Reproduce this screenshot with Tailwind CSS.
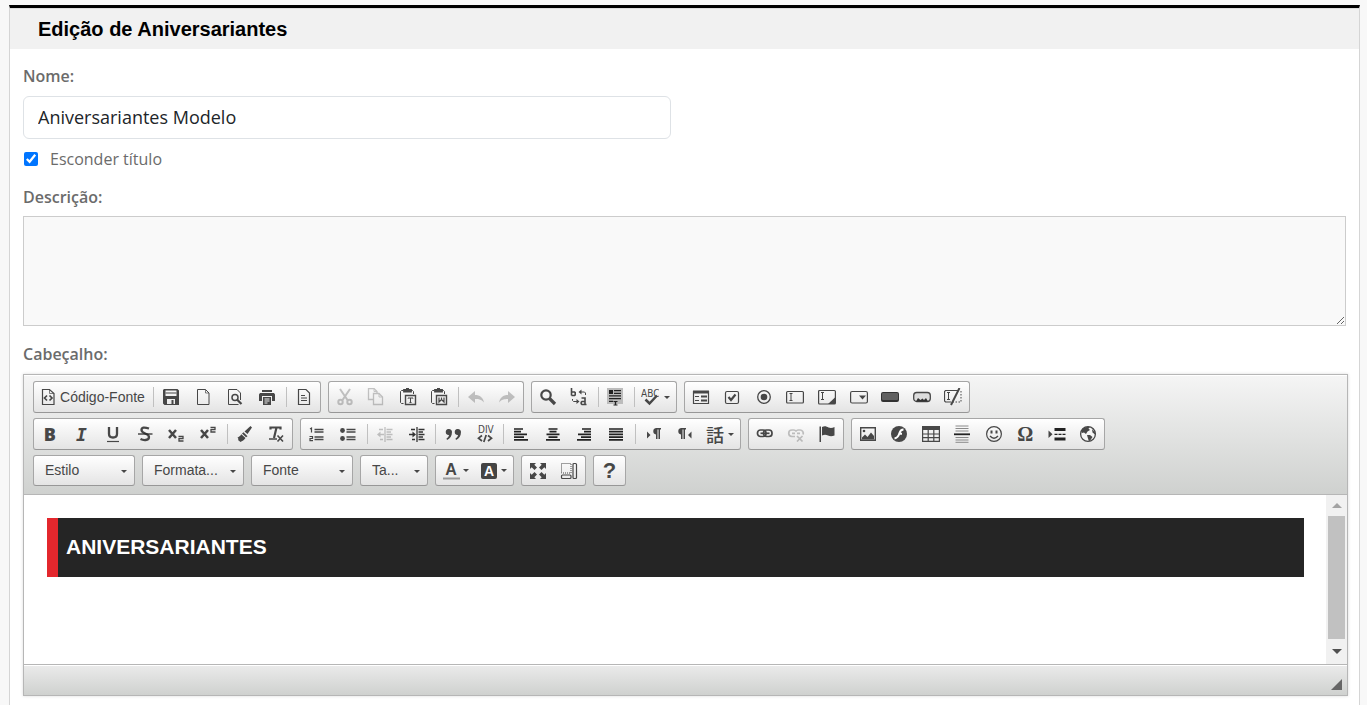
<!DOCTYPE html>
<html lang="pt-BR">
<head>
    <meta charset="UTF-8">
    <meta name="viewport" content="width=device-width, initial-scale=1.0">
    <title>Edição de Aniversariantes</title>
    <script src="https://cdn.jsdelivr.net/npm/@tailwindcss/browser@4"></script>
</head>
<body class="bg-[#f8f8f8] pt-[5px] pl-[9px] pr-[7px] font-['Open_Sans','Noto_Sans',sans-serif] text-[16px] text-[#6b6b6b] overflow-hidden">
    <main class="bg-white border-x border-[#d5d5d5] border-t-[3px] border-t-black min-h-screen">
        <header class="h-[41px] bg-[#f1f1f1] border-t border-[#dcdcdc] pl-7 flex items-center">
            <h1 class="font-['Liberation_Sans',Arial,sans-serif] font-bold text-[20px] leading-6 text-black">Edição de Aniversariantes</h1>
        </header>

        <form class="px-[13px] pt-4">
            <label for="nome" class="block font-semibold leading-[22px]">Nome:</label>
            <input id="nome" type="text" value="Aniversariantes Modelo" class="block w-[49%] h-[43px] mt-[9px] px-[14px] pb-[2px] border border-[#dee2e6] rounded-md bg-white text-[18px] text-[#212529]">

            <div class="flex items-center mt-[9px] h-[22px]">
                <input id="esconder" type="checkbox" checked class="size-[14px] ml-px mr-3 accent-[#0075ff]">
                <label for="esconder">Esconder título</label>
            </div>

            <label for="descricao" class="block font-semibold leading-[22px] mt-4">Descrição:</label>
            <textarea id="descricao" class="block w-full h-[110px] mt-[8px] p-2 border border-[#cccccc] bg-[#f9f9f9] resize"></textarea>

            <span class="block font-semibold leading-[22px] mt-[17px]">Cabeçalho:</span>

            <!-- Rich text editor -->
            <div class="box-content w-full mt-[9px] border border-[#b6b6b6] shadow-[0_0_3px_rgba(0,0,0,0.15)] font-['Liberation_Sans',Arial,sans-serif] text-[14px] text-[#474747]">
                <div class="flex flex-col gap-[5px] h-[120px] pt-[6px] px-[9px] border-b border-[#b6b6b6] shadow-[inset_0_1px_0_#fff] bg-linear-to-b from-[#f5f5f5] to-[#cfd1cf] [&_button]:h-full [&_button]:flex [&_button]:items-center [&_button]:justify-center [&_svg]:size-[18px] [&_svg]:shrink-0">

                    <!-- Row 1 -->
                    <div class="flex gap-[7px] h-8">
                        <div class="w-[288px] flex items-center border border-[#a6a6a6] border-b-[#979797] rounded-[3px] bg-linear-to-b from-white to-[#e4e4e4]">
                            <button type="button" class="w-[116px] shrink-0 gap-[3px]">
                                <svg viewBox="0 0 18 18" fill="none" stroke="currentColor"><path d="M3.500 1.500h7l4.500 4v11h-11.500z" stroke-width="1.200"/><path d="M10.500 1.500v4h4.500" stroke-width=".7"/><path d="M8 7.500l-2.500 2.500 2.500 2.500M10.500 7.500l2.500 2.500-2.500 2.500" stroke-width="1.700"/></svg>
                                Código-Fonte
                            </button>
                            <span class="w-px h-5 ml-[3px] mr-px bg-[#c0c0c0]"></span>
                            <button type="button" class="flex-1" title="Salvar"><svg viewBox="0 0 18 18"><path fill="currentColor" fill-rule="evenodd" d="M2 1h13.500l1.500 1.500V17H2.500L1 15.500V2zM3.500 2.500v5.500h11V2.500zM5 11v5h8v-5z"/><path fill="currentColor" d="M9.500 12h2v4h-2zM3.500 4.500h11v1h-11z"/></svg></button>
                            <button type="button" class="flex-1" title="Nova página"><svg viewBox="0 0 18 18" fill="none" stroke="currentColor"><path d="M3.500 1.500h8l3.500 3.500v11.500H3.500z"/><path d="M11.500 1.500V5H15" stroke-width=".7"/></svg></button>
                            <button type="button" class="flex-1" title="Visualizar"><svg viewBox="0 0 18 18" fill="none" stroke="currentColor"><path d="M14.500 12V5L11 1.500H2.500v15h10"/><circle cx="9" cy="9.500" r="3" stroke-width="1.500"/><path d="M11 11.500l4.500 4.500" stroke-width="2.200"/></svg></button>
                            <button type="button" class="flex-1" title="Imprimir"><svg viewBox="0 0 18 18" fill="currentColor"><path d="M4 2h10v2H4zM2 5h14l1 1.500V13h-3V8H4v5H1V6.500z"/><path fill-rule="evenodd" d="M5 9h8v8H5zm1.500 1.500v1h5v-1zm0 2v1h5v-1zm0 2v1h3v-1z"/></svg></button>
                            <span class="w-px h-5 ml-[3px] mr-px bg-[#c0c0c0]"></span>
                            <button type="button" class="flex-1" title="Modelos"><svg viewBox="0 0 18 18" fill="none" stroke="currentColor"><path d="M3.500 1.500h7.500l3.500 3.500v11.500h-11z" stroke-width="1.200"/><path d="M6 7.500h4M6 10h6M6 12.500h6" stroke-width="1.200"/></svg></button>
                        </div>

                        <div class="w-[196px] flex items-center border border-[#a6a6a6] border-b-[#979797] rounded-[3px] bg-linear-to-b from-white to-[#e4e4e4]">
                            <button type="button" class="flex-1 opacity-30" title="Recortar"><svg viewBox="0 0 18 18" fill="none" stroke="currentColor" stroke-width="2"><path d="M4 1l7.500 11M14 1L6.500 12"/><circle cx="4.500" cy="14" r="2.200"/><circle cx="13.500" cy="14" r="2.200"/></svg></button>
                            <button type="button" class="flex-1 opacity-30" title="Copiar"><svg viewBox="0 0 18 18" fill="none" stroke="currentColor" stroke-width="1.300"><path d="M6 11.500H1.500v-11H7l3 3v2"/><path d="M6.500 5.500H12l3.500 3.500v7.500h-9z"/><path d="M12 5.500V9h3.500M7 .500v3h3" stroke-width=".9"/></svg></button>
                            <button type="button" class="flex-1" title="Colar como texto"><svg viewBox="0 0 18 18" fill="none" stroke="currentColor"><path d="M4.500 15.500H2.500l-1-1v-11l1-1h2M12 2.500h1.500l1 1V6"/><path d="M5 2h7v1.500H5zM7 .500h3" stroke-width="1.800"/><path d="M6.500 7.500h10v9h-10z" stroke-width="1.400"/><path d="M9 10.500V10h5v.5M11.500 10v4.500M10.500 14.500h2"/></svg></button>
                            <button type="button" class="flex-1" title="Colar do Word"><svg viewBox="0 0 18 18" fill="none" stroke="currentColor"><path d="M4.500 15.500H2.500l-1-1v-11l1-1h2M12 2.500h1.500l1 1V6"/><path d="M5 2h7v1.500H5zM7 .500h3" stroke-width="1.800"/><path d="M6.500 7.500h10v9h-10z" stroke-width="1.400"/><path d="M9 9.500v4.500l2.500-2.500L14 14V9.500M11.500 9.500v2" stroke-width="1.200"/></svg></button>
                            <span class="w-px h-5 ml-[3px] mr-px bg-[#c0c0c0]"></span>
                            <button type="button" class="flex-1 opacity-30" title="Desfazer"><svg viewBox="0 0 18 18" fill="currentColor"><path d="M1 9l7-6v4c5 0 8 2.500 9 7.500-2.500-3-5-3.500-9-3.500v4z"/></svg></button>
                            <button type="button" class="flex-1 opacity-30" title="Refazer"><svg viewBox="0 0 18 18" fill="currentColor"><path d="M17 9l-7-6v4c-5 0-8 2.500-9 7.500 2.500-3 5-3.500 9-3.500v4z"/></svg></button>
                        </div>

                        <div class="w-[146px] flex items-center border border-[#a6a6a6] border-b-[#979797] rounded-[3px] bg-linear-to-b from-white to-[#e4e4e4]">
                            <button type="button" class="flex-1" title="Localizar"><svg viewBox="0 0 18 18" fill="none" stroke="currentColor"><circle cx="7" cy="7" r="4.700" stroke-width="2.200"/><path d="M10.500 10.500l5.500 5.500" stroke-width="3.200"/></svg></button>
                            <button type="button" class="flex-1" title="Substituir"><svg viewBox="0 0 18 18" fill="none" stroke="currentColor"><path d="M1.500 0v7.500M1.500 4h3l.7.7v2.100l-.7.700h-3M11.500 10h3.500v6.500h-3l-.8-.8v-1.400l.8-.8h3M15 16.500h1.500" stroke-width="1.600"/><path d="M2.500 11v1.500l1 1h4M15.500 7V5l-1-1h-4"/><path d="M6.500 11l3 2.500-3 2.500zM11.500 1.500l-3 2.500 3 2.500z" fill="currentColor" stroke="none"/></svg></button>
                            <span class="w-px h-5 ml-[3px] mr-px bg-[#c0c0c0]"></span>
                            <button type="button" class="flex-1" title="Selecionar tudo"><svg viewBox="0 0 18 18"><path fill="#bcbcbc" d="M1 0h16v16H1z"/><path fill="#222" d="M3 2h4v4H3zM8 2h7v1.200H8zM8 4.700h7v1.200H8zM3 7.300h12v1.200H3zM3 10h12v1.200H3zM3 12.700h4v1.200H3zM7.500 13h4v1h-1.300v2.500h1.300v1h-4v-1h1.300V14H7.500z"/></svg></button>
                            <span class="w-px h-5 ml-[3px] mr-px bg-[#c0c0c0]"></span>
                            <button type="button" class="w-10 shrink-0 gap-[5px]" title="Corretor ortográfico"><svg viewBox="0 0 18 18" fill="none" stroke="currentColor"><path d="M4.500 11.500l4 4 7.500-8" stroke-width="2.500"/><text x="0" y="9" font-size="10" font-family="Liberation Sans Narrow, DejaVu Sans Condensed, sans-serif" fill="currentColor" stroke="none">ABC</text></svg><span class="border-x-[3px] border-x-transparent border-t-[3px] border-t-[#474747]"></span></button>
                        </div>

                        <div class="w-[286px] flex items-center border border-[#a6a6a6] border-b-[#979797] rounded-[3px] bg-linear-to-b from-white to-[#e4e4e4]">
                            <button type="button" class="flex-1" title="Formulário"><svg viewBox="0 0 18 18" fill="none" stroke="currentColor"><path d="M1.500 3.500h15v12h-15z" stroke-width="1.200"/><path d="M1 4h16" stroke-width="3"/><path d="M3 8.500h4M3 12.500h4" stroke-width="1.200"/><path d="M9 8.500h6M9 12.500h6" stroke-width="2.200"/></svg></button>
                            <button type="button" class="flex-1" title="Caixa de seleção"><svg viewBox="0 0 18 18" fill="none" stroke="currentColor"><rect x="2.500" y="3.500" width="13" height="12" rx="1.500" stroke-width="1.200"/><path d="M5.500 9l2.500 3 4.500-5.500" stroke-width="2.200"/></svg></button>
                            <button type="button" class="flex-1" title="Botão de opção"><svg viewBox="0 0 18 18" fill="none" stroke="currentColor"><circle cx="9" cy="9" r="6.300" stroke-width="1.300"/><circle cx="9" cy="9" r="3.300" fill="currentColor" stroke="none"/></svg></button>
                            <button type="button" class="flex-1" title="Caixa de texto"><svg viewBox="0 0 18 18" fill="none" stroke="currentColor"><rect x=".6" y="3.500" width="16.800" height="11.500" rx="1" stroke-width="1.200"/><path d="M3.500 5.500h3M3.500 12.500h3M5 5.500v7"/></svg></button>
                            <button type="button" class="flex-1" title="Área de texto"><svg viewBox="0 0 18 18" fill="none" stroke="currentColor"><rect x=".6" y="2.500" width="16.800" height="13.500" rx="1" stroke-width="1.200"/><path d="M3 4.500h3M3 11.500h3M4.500 4.500v7"/><path d="M17 9.500V16h-7z" fill="currentColor" stroke="none"/></svg></button>
                            <button type="button" class="flex-1" title="Caixa de listagem"><svg viewBox="0 0 18 18" fill="none" stroke="currentColor"><rect x=".6" y="3.500" width="16.800" height="11.500" rx="1.500" stroke-width="1.200"/><path d="M9 7.500h7l-3.500 4z" fill="currentColor" stroke="none"/></svg></button>
                            <button type="button" class="flex-1" title="Botão"><svg viewBox="0 0 18 18"><rect x="0" y="4" width="18" height="10" rx="2" fill="#333"/><rect x="1" y="5" width="16" height="7" rx="1" fill="#606060"/></svg></button>
                            <button type="button" class="flex-1" title="Botão de imagem"><svg viewBox="0 0 18 18"><rect x=".7" y="4.500" width="16.600" height="9" rx="3" fill="#ddd" stroke="currentColor" stroke-width="1.300"/><path fill="#333" d="M3 13.500l2-3.500 2.500 2 2-1.500 1.500 1.500 2-2 2 3.500z"/></svg></button>
                            <button type="button" class="flex-1" title="Campo oculto"><svg viewBox="0 0 18 18" fill="none" stroke="currentColor"><path d="M14 2.500H1.500l-1 1v9.500l1 1H7" stroke-width="1.200"/><path d="M3 4.500h3M3 11.500h3M4.500 4.500v7"/><path d="M17 3v11H9" stroke-dasharray="1.500 1.500"/><path d="M15.500 0L7 17" stroke-width="2"/></svg></button>
                        </div>
                    </div>

                    <!-- Row 2 -->
                    <div class="flex gap-[7px] h-8">
                        <div class="w-[260px] flex items-center border border-[#a6a6a6] border-b-[#979797] rounded-[3px] bg-linear-to-b from-white to-[#e4e4e4]">
                            <button type="button" class="flex-1 font-['Open_Sans',sans-serif] font-extrabold text-[18px]" title="Negrito">B</button>
                            <button type="button" class="flex-1 font-['DejaVu_Sans_Mono',monospace] font-bold italic text-[18px]" title="Itálico">I</button>
                            <button type="button" class="flex-1" title="Sublinhado"><svg viewBox="0 0 18 18" fill="none" stroke="currentColor"><path d="M5 2v7q0 3.500 4 3.500t4-3.500V2" stroke-width="2.300"/><path d="M3 16.500h12" stroke-width="1.200"/></svg></button>
                            <button type="button" class="flex-1" title="Tachado"><svg viewBox="0 0 18 18" fill="none" stroke="currentColor"><path d="M13 3.500Q5.500 1 5.500 5c0 4 7.500 3 7.500 7 0 4-6 3.300-8.500 2" stroke-width="2.300"/><path d="M2 9h14.500" stroke="#222" stroke-width="1.200"/></svg></button>
                            <button type="button" class="flex-1" title="Subscrito"><svg viewBox="0 0 18 18" fill="none" stroke="currentColor"><path d="M2 5l7 8M9 5l-7 8" stroke-width="2.500"/><path d="M11.500 11.500H16v2.200h-4v2.300h4.500" stroke-width="1.300"/></svg></button>
                            <button type="button" class="flex-1" title="Sobrescrito"><svg viewBox="0 0 18 18" fill="none" stroke="currentColor"><path d="M2 5l7 8M9 5l-7 8" stroke-width="2.500"/><path d="M11.500 2.500H16v2.200h-4V7h4.500" stroke-width="1.300"/></svg></button>
                            <span class="w-px h-5 ml-[3px] mr-px bg-[#c0c0c0]"></span>
                            <button type="button" class="flex-1" title="Copiar formatação"><svg viewBox="0 0 18 18" fill="currentColor"><path d="M14.500 1L16 2.500 11.500 9 8.500 6.500zM7.500 7.300l4 4-1.500 1L6 8.500zM5.300 9.300l4.200 3.700c-1 2-3.500 3-5 4L2 15l.5-1-1-1.500c1.500-.5 2.800-1.500 3.800-3.200z"/></svg></button>
                            <button type="button" class="flex-1" title="Remover formatação"><svg viewBox="0 0 18 18" fill="none" stroke="currentColor"><path d="M3.500 4.500V2.500h10v2M9.500 2.500L7 13" stroke-width="2.200"/><path d="M2 14h8M10.500 10.500l5.500 6M16 10.500l-5.500 6" stroke-width="1.600"/></svg></button>
                        </div>

                        <div class="w-[441px] flex items-center border border-[#a6a6a6] border-b-[#979797] rounded-[3px] bg-linear-to-b from-white to-[#e4e4e4]">
                            <button type="button" class="flex-1" title="Lista numerada"><svg viewBox="0 0 18 18" fill="none" stroke="currentColor"><path d="M6.500 4.500h9M6.500 7h9M6.500 12h9M6.500 14.500h9" stroke-width="1.400"/><path d="M2 4l1.500-1v4.500M1.500 11.500h3v2H2v2.200h3" stroke-width="1.200"/></svg></button>
                            <button type="button" class="flex-1" title="Lista com marcadores"><svg viewBox="0 0 18 18" fill="none" stroke="currentColor"><path d="M7.500 4.500h9M7.500 7h9M7.500 12h9M7.500 14.500h9" stroke-width="1.400"/><g fill="currentColor" stroke="none"><circle cx="3.500" cy="5.500" r="2.400"/><circle cx="3.500" cy="13.500" r="2.400"/></g></svg></button>
                            <span class="w-px h-5 ml-[3px] mr-px bg-[#c0c0c0]"></span>
                            <button type="button" class="flex-1 opacity-30" title="Diminuir recuo"><svg viewBox="0 0 18 18" fill="none" stroke="currentColor"><path d="M9 2v15M10.500 4.500h6M10.500 7h4.500M10.500 9.500h6M10.500 12h4.500M10.500 14.500h6M3 4.500h4M4 14.500h3M3 9.500h5" stroke-width="1.300"/><path d="M4.500 6.500L1 9.500l3.500 3z" fill="currentColor" stroke="none"/></svg></button>
                            <button type="button" class="flex-1" title="Aumentar recuo"><svg viewBox="0 0 18 18" fill="none" stroke="#333"><path d="M9 2v15M10.500 4.500h6M10.500 7h4.500M10.500 9.500h6M10.500 12h4.500M10.500 14.500h6M3 4.500h4M4 14.500h3M1 9.500h5" stroke-width="1.300"/><path d="M4.500 6.500L8 9.500l-3.500 3z" fill="#333" stroke="none"/></svg></button>
                            <span class="w-px h-5 ml-[3px] mr-px bg-[#c0c0c0]"></span>
                            <button type="button" class="flex-1" title="Citação"><svg viewBox="0 0 18 18" fill="currentColor"><path d="M4.500 4a3 3 0 0 1 3.500 3c0 4-2 6.500-5 8l-.500-1.500c1.500-1 2.300-2 2.500-3.500A3 3 0 0 1 4.500 4zM13.500 4a3 3 0 0 1 3.500 3c0 4-2 6.500-5 8l-.500-1.500c1.500-1 2.300-2 2.500-3.500A3 3 0 0 1 13.500 4z"/></svg></button>
                            <button type="button" class="flex-1" title="Div"><svg viewBox="0 0 18 18" fill="none" stroke="currentColor"><text x="2" y="8" font-size="10" font-family="Liberation Sans Narrow, DejaVu Sans Condensed, sans-serif" fill="currentColor" stroke="none">DIV</text><path d="M6 10.500l-3.500 2.700L6 16M12 10.500l3.500 2.700L12 16M10.200 10l-2.400 7" stroke-width="1.700"/></svg></button>
                            <span class="w-px h-5 ml-[3px] mr-px bg-[#c0c0c0]"></span>
                            <button type="button" class="flex-1" title="Alinhar à esquerda"><svg viewBox="0 0 18 18" fill="none" stroke="#222" stroke-width="1.700"><path d="M2 4h9M2 6.700h7M2 9.400h13M2 12.100h10M2 14.800h14"/></svg></button>
                            <button type="button" class="flex-1" title="Centralizar"><svg viewBox="0 0 18 18" fill="none" stroke="#222" stroke-width="1.700"><path d="M4.500 4h9M5.500 6.700h7M2.500 9.400h13M4.500 12.100h9M2 14.800h14"/></svg></button>
                            <button type="button" class="flex-1" title="Alinhar à direita"><svg viewBox="0 0 18 18" fill="none" stroke="#222" stroke-width="1.700"><path d="M7 4h9M9 6.700h7M3 9.400h13M6 12.100h10M2 14.800h14"/></svg></button>
                            <button type="button" class="flex-1" title="Justificado"><svg viewBox="0 0 18 18" fill="none" stroke="#222" stroke-width="1.700"><path d="M2 4h14M2 6.700h14M2 9.400h14M2 12.100h14M2 14.800h14"/></svg></button>
                            <span class="w-px h-5 ml-[3px] mr-px bg-[#c0c0c0]"></span>
                            <button type="button" class="flex-1" title="Esquerda para direita"><svg viewBox="0 0 18 18" fill="currentColor"><path d="M3 6.500L6.500 10 3 13.500zM17 3v1.500h-1V14h-1.500V4.500h-1V14H12V9.500A3.300 3.300 0 0 1 12 3z"/></svg></button>
                            <button type="button" class="flex-1" title="Direita para esquerda"><svg viewBox="0 0 18 18" fill="currentColor"><path d="M16.500 6.500L13 10l3.500 3.500zM11 3v1.500h-1V14H8.500V4.500h-1V14H6V9.500A3.300 3.300 0 0 1 6 3z"/></svg></button>
                            <button type="button" class="w-10 shrink-0 gap-1" title="Idioma"><span class="w-[18px] leading-[18px] text-[18px] font-medium font-['Noto_Sans_CJK_JP',sans-serif]">話</span><span class="border-x-[3px] border-x-transparent border-t-[3px] border-t-[#474747]"></span></button>
                        </div>

                        <div class="w-[96px] flex items-center border border-[#a6a6a6] border-b-[#979797] rounded-[3px] bg-linear-to-b from-white to-[#e4e4e4]">
                            <button type="button" class="flex-1" title="Link"><svg viewBox="0 0 18 18" fill="none" stroke="currentColor" stroke-width="1.700"><rect x="1.500" y="5" width="8.500" height="6.500" rx="3"/><rect x="7.500" y="5" width="8.500" height="6.500" rx="3"/><path d="M4.500 8.300h9"/></svg></button>
                            <button type="button" class="flex-1 opacity-30" title="Remover link"><svg viewBox="0 0 18 18" fill="none" stroke="currentColor" stroke-width="1.700"><path d="M8 11.500H5a3.200 3.200 0 0 1 0-6.500h2a3 3 0 0 1 2 1 3 3 0 0 1 2-1h2a3.200 3.200 0 0 1 3 4.500M5 8.300h3M10 8.300h3M10 11l5.500 5.500M15.500 11L10 16.500"/></svg></button>
                            <button type="button" class="flex-1" title="Âncora"><svg viewBox="0 0 18 18" fill="currentColor"><path d="M1.500 1.500H3V17H1.500zM4 2c3-1.500 4.500-.5 6.500.5 2 .8 4 .5 6-.5v8.500c-2.500 1-4.500 1-6.500 0-2-.8-3.500-1-6 0z"/></svg></button>
                        </div>

                        <div class="w-[254px] flex items-center border border-[#a6a6a6] border-b-[#979797] rounded-[3px] bg-linear-to-b from-white to-[#e4e4e4]">
                            <button type="button" class="flex-1" title="Imagem"><svg viewBox="0 0 18 18" fill="none" stroke="currentColor"><path d="M1.700 2.700h14.600v12.600H1.700z" stroke-width="1.400"/><path d="M3 14.500v-2l3-3 2.500 2.500L12 7.500l3 3.500v3.500z" fill="currentColor" stroke="none"/><circle cx="5" cy="6" r="1.300" fill="currentColor" stroke="none"/></svg></button>
                            <button type="button" class="flex-1" title="Flash"><svg viewBox="0 0 18 18"><circle cx="9" cy="9" r="8" fill="currentColor"/><path d="M13.500 4.500q-3 0-4 3.500-1.500 5-5 5.500M8.500 8.700h3.500" fill="none" stroke="#fff" stroke-width="2"/></svg></button>
                            <button type="button" class="flex-1" title="Tabela"><svg viewBox="0 0 18 18" fill="none" stroke="currentColor" stroke-width="1.200"><path d="M.6 2.500h16.800v13.900H.6zM6.200 5v11M11.800 5v11M1 9h16M1 12.700h16"/><path d="M0 3h18" stroke-width="4"/></svg></button>
                            <button type="button" class="flex-1" title="Linha horizontal"><svg viewBox="0 0 18 18" fill="none"><path d="M2.500 1h13M2.500 3.500h13M2.500 6h13M2.500 12.500h13M2.500 15h13M2.500 17.300h13" stroke="#8a8a8a"/><path d="M1 9.300h16" stroke="#222" stroke-width="1.800"/></svg></button>
                            <button type="button" class="flex-1" title="Emoticon"><svg viewBox="0 0 18 18" fill="none" stroke="currentColor"><circle cx="9" cy="9" r="7.400" stroke-width="1.200"/><path d="M5 11q4 4.500 8 0" stroke-width="1.400"/><path d="M6.500 5.500v3M11.500 5.500v3" stroke-width="2"/></svg></button>
                            <button type="button" class="flex-1 font-['Liberation_Serif',serif] font-bold text-[20px]" title="Caractere especial">Ω</button>
                            <button type="button" class="flex-1" title="Quebra de página"><svg viewBox="0 0 18 18" fill="none" stroke="#222"><path d="M6.500 4.500h11M6.500 14h11" stroke-width="2.800"/><path d="M6.500 9.300h11" stroke-width="1.200" stroke-dasharray="3 1"/><path d="M.5 5.500L4.500 9.300.5 13z" fill="#444" stroke="none"/></svg></button>
                            <button type="button" class="flex-1" title="IFrame"><svg viewBox="0 0 18 18"><circle cx="9" cy="9" r="7.400" fill="#f4f4f4" stroke="currentColor" stroke-width="1.300"/><path fill="currentColor" d="M3 4.500Q6 1 11 2L9.500 3.500 11 5 8.500 6.500 7 9 5 7.500l-2 .5zM8 10h3l2.500 2-2 3-1.500 1.500-1-3zM13 4l3 3.500v2l-2.500-2z"/></svg></button>
                        </div>
                    </div>

                    <!-- Row 3 -->
                    <div class="flex gap-[7px] h-[31px]">
                        <div class="relative w-[102px] border border-[#a6a6a6] border-b-[#979797] rounded-[3px] bg-linear-to-b from-white to-[#e4e4e4]">
                            <select aria-label="Estilo" class="appearance-none block w-full h-full pl-[11px] outline-none"><option>Estilo</option></select>
                            <span class="absolute right-[7px] top-[14px] border-x-[3px] border-x-transparent border-t-[3px] border-t-[#474747] pointer-events-none"></span>
                        </div>
                        <div class="relative w-[102px] border border-[#a6a6a6] border-b-[#979797] rounded-[3px] bg-linear-to-b from-white to-[#e4e4e4]">
                            <select aria-label="Formatação" class="appearance-none block w-full h-full pl-[11px] outline-none"><option>Formata...</option></select>
                            <span class="absolute right-[7px] top-[14px] border-x-[3px] border-x-transparent border-t-[3px] border-t-[#474747] pointer-events-none"></span>
                        </div>
                        <div class="relative w-[102px] border border-[#a6a6a6] border-b-[#979797] rounded-[3px] bg-linear-to-b from-white to-[#e4e4e4]">
                            <select aria-label="Fonte" class="appearance-none block w-full h-full pl-[11px] outline-none"><option>Fonte</option></select>
                            <span class="absolute right-[7px] top-[14px] border-x-[3px] border-x-transparent border-t-[3px] border-t-[#474747] pointer-events-none"></span>
                        </div>
                        <div class="relative w-[68px] border border-[#a6a6a6] border-b-[#979797] rounded-[3px] bg-linear-to-b from-white to-[#e4e4e4]">
                            <select aria-label="Tamanho" class="appearance-none block w-full h-full pl-[11px] outline-none"><option>Ta...</option></select>
                            <span class="absolute right-[7px] top-[14px] border-x-[3px] border-x-transparent border-t-[3px] border-t-[#474747] pointer-events-none"></span>
                        </div>

                        <div class="w-[79px] flex items-center border border-[#a6a6a6] border-b-[#979797] rounded-[3px] bg-linear-to-b from-white to-[#e4e4e4]">
                            <button type="button" class="flex-1 gap-[3px]" title="Cor do texto"><svg viewBox="0 0 18 18"><text x="9" y="13" text-anchor="middle" font-size="16" font-weight="bold" fill="currentColor">A</text><path fill="#999" d="M1 15.500h17v2H1z"/></svg><span class="border-x-[3px] border-x-transparent border-t-[3px] border-t-[#474747]"></span></button>
                            <button type="button" class="flex-1 gap-[3px]" title="Cor do plano de fundo"><svg viewBox="0 0 18 18"><rect x="1" y="1" width="16" height="16" rx="2" fill="#444"/><text x="9" y="14" text-anchor="middle" font-size="14" font-weight="bold" fill="#fff">A</text></svg><span class="border-x-[3px] border-x-transparent border-t-[3px] border-t-[#474747]"></span></button>
                        </div>

                        <div class="w-[65px] flex items-center border border-[#a6a6a6] border-b-[#979797] rounded-[3px] bg-linear-to-b from-white to-[#e4e4e4]">
                            <button type="button" class="flex-1" title="Maximizar"><svg viewBox="0 0 18 18"><path fill="currentColor" d="M1 1h6L5.300 2.700 8 5.500 5.500 8 2.700 5.300 1 7zM17 1h-6l1.700 1.700L10 5.500 12.500 8l2.800-2.700L17 7zM1 17h6l-1.700-1.700L8 12.500 5.500 10l-2.800 2.700L1 11zM17 17h-6l1.700-1.700-2.700-2.800 2.500-2.500 2.800 2.700L17 11z"/></svg></button>
                            <button type="button" class="flex-1" title="Exibir blocos"><svg viewBox="0 0 18 18" fill="none" stroke="currentColor"><path d="M1.500 1.500h9.500v9.500H1.500z" stroke-dasharray="1 1"/><rect x="13" y="1.500" width="3.500" height="15" rx="1" stroke-width="1.200"/><rect x="1.500" y="13" width="9.500" height="3.500" rx="1" stroke-width="1.200"/></svg></button>
                        </div>

                        <div class="w-[33px] flex items-center border border-[#a6a6a6] border-b-[#979797] rounded-[3px] bg-linear-to-b from-white to-[#e4e4e4]">
                            <button type="button" class="flex-1 font-['Liberation_Sans',sans-serif] font-bold text-[22px]" title="Sobre">?</button>
                        </div>
                    </div>
                </div>

                <!-- Content area -->
                <div class="flex h-[169px] bg-white">
                    <div class="flex-1 pt-[23px] pl-[23px] pr-[22px]">
                        <h2 class="h-[59px] flex items-center bg-[#252525] border-l-[11px] border-[#e3272d] pl-2 pb-[2px] font-bold text-[21px] text-white">ANIVERSARIANTES</h2>
                    </div>
                    <div class="w-[21px] flex flex-col items-center bg-[#f1f1f1]">
                        <span class="h-[21px] flex items-center"><span class="border-x-[5px] border-x-transparent border-b-[5px] border-b-[#a3a3a3]"></span></span>
                        <span class="w-[17px] h-[123px] bg-[#c1c1c1]"></span>
                        <span class="flex-1 flex items-center"><span class="border-x-[5px] border-x-transparent border-t-[5px] border-t-[#505050]"></span></span>
                    </div>
                </div>

                <div class="h-[31px] flex items-end justify-end pr-[5px] pb-[5px] border-t border-[#b6b6b6] shadow-[inset_0_1px_0_#fff] bg-linear-to-b from-[#ebebeb] to-[#cfd1cf]">
                    <svg class="size-[11px]" viewBox="0 0 11 11"><path d="M11 0v11H0z" fill="#666"/></svg>
                </div>
            </div>
        </form>
    </main>
</body>
</html>
